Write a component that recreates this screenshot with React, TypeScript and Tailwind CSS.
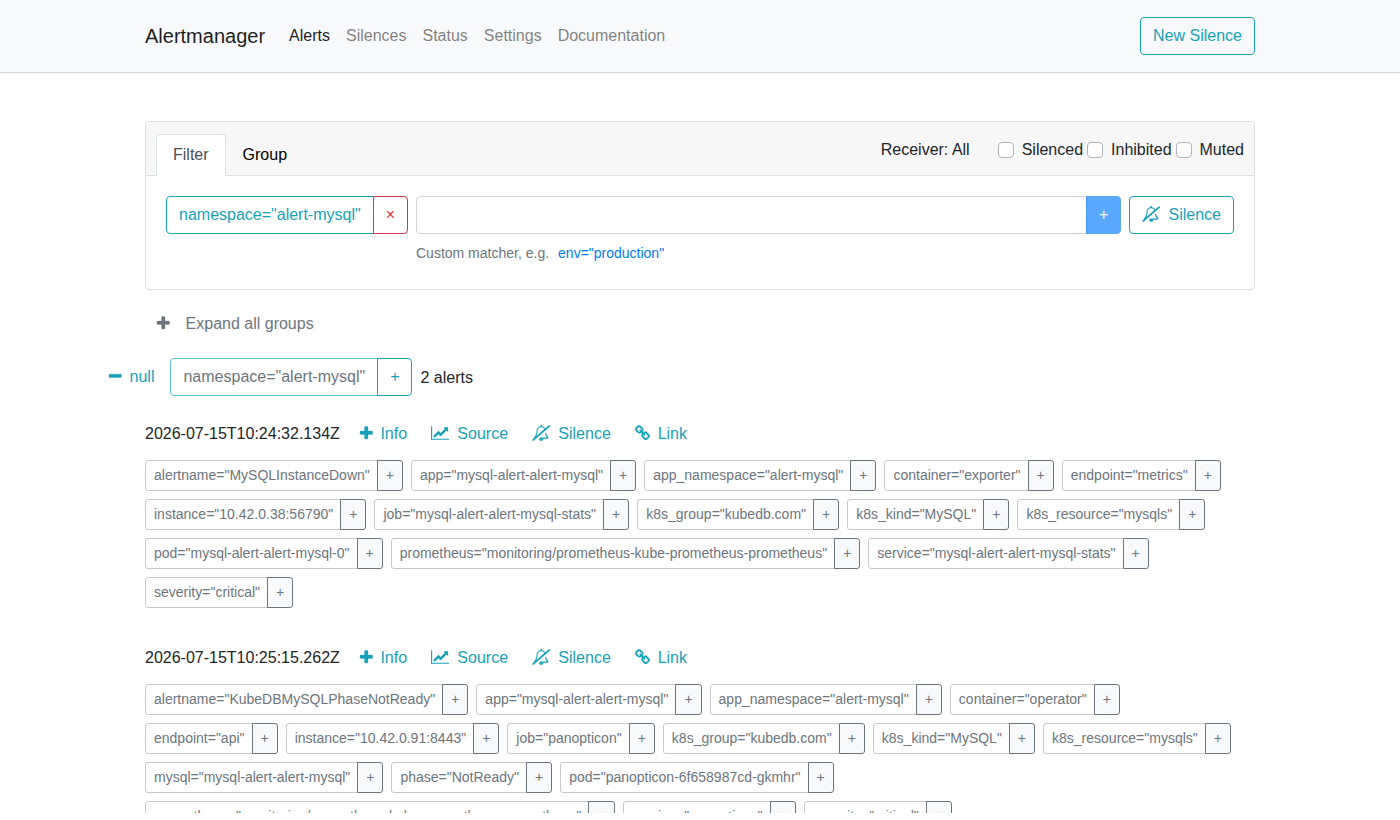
import { useState } from 'react'
import clsx from 'clsx'

interface IconProps {
  className?: string
}

function PlusIcon({ className }: IconProps) {
  return (
    <svg
      viewBox="192 -34 1408 1792"
      fill="currentColor"
      stroke="currentColor"
      strokeWidth="36"
      className={clsx('mb-0.5 h-4 w-[12.57px] shrink-0 overflow-visible', className)}
    >
      <path d="M1600 736v192q0 40-28 68t-68 28h-416v416q0 40-28 68t-68 28h-192q-40 0-68-28t-28-68v-416h-416q-40 0-68-28t-28-68v-192q0-40 28-68t68-28h416v-416q0-40 28-68t68-28h192q40 0 68 28t28 68v416h416q40 0 68 28t28 68z" />
    </svg>
  )
}

function MinusIcon({ className }: IconProps) {
  return (
    <svg
      viewBox="192 -52 1408 1792"
      fill="currentColor"
      stroke="currentColor"
      strokeWidth="36"
      className={clsx('mb-0.5 h-4 w-[12.57px] shrink-0 overflow-visible', className)}
    >
      <path d="M1600 736v192q0 40-28 68t-68 28h-1216q-40 0-68-28t-28-68v-192q0-40 28-68t68-28h1216q40 0 68 28t28 68z" />
    </svg>
  )
}

function ChartIcon() {
  return (
    <svg viewBox="0 0 2048 1792" fill="currentColor" className="mb-0.5 h-4 w-[18.28px] shrink-0">
      <path d="M2048 1536v128h-2048v-1536h128v1408h1920zM1920 288v435q0 21-19.5 29.5t-35.5-7.5l-121-121-633 633q-10 10-23 10t-23-10l-233-233-416 416-192-192 585-585q10-10 23-10t23 10l233 233 464-464-121-121q-16-16-7.5-35.5t29.5-19.5h435q14 0 23 9t9 23z" />
    </svg>
  )
}

function BellSlashIcon() {
  return (
    <svg viewBox="0 0 2048 1792" fill="currentColor" className="mb-0.5 h-4 w-[18.28px] shrink-0 overflow-visible">
      <path d="M1040 1696q0-16-16-16-59 0-101.5-42.5t-42.5-101.5q0-16-16-16t-16 16q0 73 51.5 124.5t124.5 51.5q16 0 16-16zM504 1221l877-760q-42-88-132.5-146.5t-224.5-58.5q-93 0-169.5 31.5t-121.5 80.5-69 103-24 105q0 384-137 645zM1856 1408q0 52-38 90t-90 38h-448q0 106-75 181t-181 75-180.5-74.5-75.5-180.5l149-129h757q-166-187-227-459l111-97q61 356 298 556zM1942 20l84 96q8 10 7.5 23.5t-10.5 22.5l-1872 1622q-10 8-23.5 7t-21.5-11l-84-96q-8-10-7.5-23.5t10.5-21.5l186-161q-19-32-19-66 50-42 91-88t85-119.5 74.5-158.5 50-206 19.5-260q0-152 117-282.5t307-158.5q-8-19-8-39 0-40 28-68t68-28 68 28 28 68q0 20-8 39 124 18 219 82.5t148 157.5l418-363q10-8 23.5-7t21.5 11z" />
    </svg>
  )
}

function LinkIcon() {
  return (
    <svg
      viewBox="64 -20 1664 1792"
      fill="currentColor"
      stroke="currentColor"
      strokeWidth="24"
      className="mb-0.5 h-4 w-[14.86px] shrink-0 overflow-visible"
    >
      <path d="M1520 1216q0-40-28-68l-208-208q-28-28-68-28-42 0-72 32 3 3 19 18.5t21.5 21.5 15 19 13 25.5 3.5 27.5q0 40-28 68t-68 28q-15 0-27.5-3.5t-25.5-13-19-15-21.5-21.5-18.5-19q-33 31-33 73 0 40 28 68l206 207q27 27 68 27 40 0 68-26l147-146q28-28 28-67zm-703-705q0-40-28-68l-206-207q-28-28-68-28-39 0-68 27l-147 146q-28 28-28 67 0 40 28 68l208 208q27 27 68 27 42 0 72-31-3-3-19-18.5t-21.5-21.5-15-19-13-25.5-3.5-27.5q0-40 28-68t68-28q15 0 27.5 3.5t25.5 13 19 15 21.5 21.5 18.5 19q33-31 33-73zm895 705q0 120-85 203l-147 146q-83 83-203 83-121 0-204-85l-206-207q-83-83-83-203 0-123 88-209l-88-88q-86 88-208 88-120 0-204-84l-208-208q-84-84-84-204t85-203l147-146q83-83 203-83 121 0 204 85l206 207q83 83 83 203 0 123-88 209l88 88q86-88 208-88 120 0 204 84l208 208q84 84 84 204z" />
    </svg>
  )
}

const navItems = ['Alerts', 'Silences', 'Status', 'Settings', 'Documentation']

const alerts = [
  {
    startsAt: '2026-07-15T10:24:32.134Z',
    labels: [
      'alertname="MySQLInstanceDown"',
      'app="mysql-alert-alert-mysql"',
      'app_namespace="alert-mysql"',
      'container="exporter"',
      'endpoint="metrics"',
      'instance="10.42.0.38:56790"',
      'job="mysql-alert-alert-mysql-stats"',
      'k8s_group="kubedb.com"',
      'k8s_kind="MySQL"',
      'k8s_resource="mysqls"',
      'pod="mysql-alert-alert-mysql-0"',
      'prometheus="monitoring/prometheus-kube-prometheus-prometheus"',
      'service="mysql-alert-alert-mysql-stats"',
      'severity="critical"',
    ],
  },
  {
    startsAt: '2026-07-15T10:25:15.262Z',
    labels: [
      'alertname="KubeDBMySQLPhaseNotReady"',
      'app="mysql-alert-alert-mysql"',
      'app_namespace="alert-mysql"',
      'container="operator"',
      'endpoint="api"',
      'instance="10.42.0.91:8443"',
      'job="panopticon"',
      'k8s_group="kubedb.com"',
      'k8s_kind="MySQL"',
      'k8s_resource="mysqls"',
      'mysql="mysql-alert-alert-mysql"',
      'phase="NotReady"',
      'pod="panopticon-6f658987cd-gkmhr"',
      'prometheus="monitoring/prometheus-kube-prometheus-prometheus"',
      'service="panopticon"',
      'severity="critical"',
    ],
  },
]

function Navbar() {
  return (
    <header className="border-b border-[#d4d7da] bg-[#f8f9fa]">
      <nav className="mx-auto flex h-[72px] w-[1110px] items-center">
        <a className="mr-6 text-xl leading-[30px] text-black/90">Alertmanager</a>
        <ul className="flex gap-4">
          {navItems.map((item) => (
            <li key={item} className={item === 'Alerts' ? 'text-black/90' : 'text-black/50'}>
              {item}
            </li>
          ))}
        </ul>
        <button type="button" className="ml-auto h-[38px] rounded border border-[#17a2b8] px-3 text-[#17a2b8]">
          New Silence
        </button>
      </nav>
    </header>
  )
}

function Checkbox({ label }: { label: string }) {
  const [checked, setChecked] = useState(false)

  return (
    <label className="flex items-center gap-2">
      <input
        type="checkbox"
        checked={checked}
        onChange={() => setChecked(!checked)}
        className="h-4 w-4 appearance-none rounded border border-[#adb5bd] bg-white checked:bg-[#007bff]"
      />
      {label}
    </label>
  )
}

function FilterCard() {
  const [matcher, setMatcher] = useState('')

  return (
    <section className="mt-12 h-[169px] rounded border border-[#dfdfdf]">
      <div className="flex h-[54px] justify-between rounded-t-[3px] border-b border-[#dfdfdf] bg-[#f7f7f7] px-2.5 pt-3">
        <div className="flex">
          <button
            type="button"
            className="h-[42px] rounded-t border border-b-0 border-[#dee2e6] bg-white px-4 pb-px text-[#495057]"
          >
            Filter
          </button>
          <button type="button" className="h-[42px] px-[17px] text-black">
            Group
          </button>
        </div>
        <div className="flex h-8 items-center">
          <span className="mr-7">Receiver: All</span>
          <div className="flex gap-1">
            <Checkbox label="Silenced" />
            <Checkbox label="Inhibited" />
            <Checkbox label="Muted" />
          </div>
        </div>
      </div>
      <div className="flex items-start gap-2 p-5">
        <div className="flex h-[38px]">
          <button type="button" className="rounded-l border border-[#17a2b8] px-3 text-[#17a2b8]">
            namespace="alert-mysql"
          </button>
          <button type="button" className="-ml-px rounded-r border border-[#dc3545] px-3 text-[#dc3545]">
            ×
          </button>
        </div>
        <div className="flex-1">
          <div className="flex h-[38px]">
            <input
              value={matcher}
              onChange={(e) => setMatcher(e.target.value)}
              className="min-w-0 flex-1 rounded-l border border-[#ced4da] px-3 focus:outline-none"
            />
            <button
              type="button"
              disabled
              className="-ml-px rounded-r border border-[#007bff] bg-[#007bff] px-3 text-white opacity-65"
            >
              +
            </button>
          </div>
          <p className="mt-2 text-sm leading-[22px] text-[#6c757d]">
            Custom matcher, e.g.
            <a className="ml-[9px] text-[#007bff]">env="production"</a>
          </p>
        </div>
        <button
          type="button"
          className="flex h-[38px] items-center gap-2 rounded border border-[#17a2b8] px-3 text-[#17a2b8]"
        >
          <BellSlashIcon />
          Silence
        </button>
      </div>
    </section>
  )
}

function LabelButton({ label }: { label: string }) {
  return (
    <div className="flex h-[31px] text-sm text-[#6c757d]">
      <span className="rounded-l-[3px] border border-[#c6c8ca] pr-[7px] pl-2 leading-[29px]">{label}</span>
      <button
        type="button"
        className="-ml-px rounded-r-[3px] border border-[#6c757d] bg-[#f8f9fa] px-2 leading-[21px]"
      >
        +
      </button>
    </div>
  )
}

function AlertItem({ startsAt, labels }: { startsAt: string; labels: string[] }) {
  return (
    <li>
      <div className="flex h-[38px] items-center">
        <span className="mr-2">{startsAt}</span>
        <div className="flex text-[#17a2b8]">
          <a className="flex items-center gap-2 px-3">
            <PlusIcon />
            Info
          </a>
          <a className="flex items-center gap-2 px-3">
            <ChartIcon />
            Source
          </a>
          <a className="flex items-center gap-2 px-3">
            <BellSlashIcon />
            Silence
          </a>
          <a className="flex items-center gap-2 px-3">
            <LinkIcon />
            Link
          </a>
        </div>
      </div>
      <div className="mt-[7px] flex flex-wrap gap-2">
        {labels.map((label) => (
          <LabelButton key={label} label={label} />
        ))}
      </div>
    </li>
  )
}

export default function App() {
  return (
    <div className="h-[813px] overflow-hidden bg-white font-['Liberation_Sans',Arial,sans-serif] text-base text-[#212529]">
      <Navbar />
      <main className="mx-auto w-[1110px]">
        <FilterCard />
        <button type="button" className="mt-[22px] ml-3 flex items-center gap-4 text-[#6c757d]">
          <PlusIcon />
          Expand all groups
        </button>
        <div className="mt-[22px] -ml-9 flex h-[38px] items-center">
          <button type="button" className="mr-4 flex items-center gap-2 text-[#17a2b8]">
            <MinusIcon />
            null
          </button>
          <div className="flex h-full">
            <span className="rounded-l border border-[#5bc0de] px-3 leading-9 text-[#6c757d]">
              namespace="alert-mysql"
            </span>
            <button type="button" className="-ml-px rounded-r border border-[#17a2b8] px-3 text-[#17a2b8]">
              +
            </button>
          </div>
          <span className="mt-0.5 ml-2">2 alerts</span>
        </div>
        <ul className="mt-[19px] flex flex-col gap-[31px]">
          {alerts.map((alert) => (
            <AlertItem key={alert.startsAt} startsAt={alert.startsAt} labels={alert.labels} />
          ))}
        </ul>
      </main>
    </div>
  )
}
